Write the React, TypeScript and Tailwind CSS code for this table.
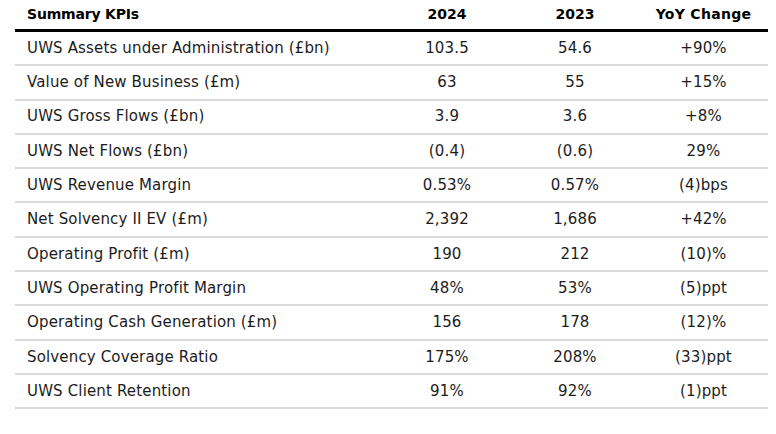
const rows: [string, string, string, string][] = [
  ['UWS Assets under Administration (£bn)', '103.5', '54.6', '+90%'],
  ['Value of New Business (£m)', '63', '55', '+15%'],
  ['UWS Gross Flows (£bn)', '3.9', '3.6', '+8%'],
  ['UWS Net Flows (£bn)', '(0.4)', '(0.6)', '29%'],
  ['UWS Revenue Margin', '0.53%', '0.57%', '(4)bps'],
  ['Net Solvency II EV (£m)', '2,392', '1,686', '+42%'],
  ['Operating Profit (£m)', '190', '212', '(10)%'],
  ['UWS Operating Profit Margin', '48%', '53%', '(5)ppt'],
  ['Operating Cash Generation (£m)', '156', '178', '(12)%'],
  ['Solvency Coverage Ratio', '175%', '208%', '(33)ppt'],
  ['UWS Client Retention', '91%', '92%', '(1)ppt'],
];

export default function App() {
  return (
    <div className="w-[776px] h-[434px] bg-white font-['DejaVu_Sans',sans-serif] text-[#1c1c1c]">
      <div className="ml-[15px] w-[753px]">
        <div className="grid grid-cols-[368px_128px_128px_129px] h-[32px] items-center border-b-[3px] border-black text-[14px] font-bold text-black">
          <div className="pl-3 tracking-[-0.2px]">Summary KPIs</div>
          <div className="text-center">2024</div>
          <div className="text-center">2023</div>
          <div className="text-center tracking-[0.3px]">YoY Change</div>
        </div>
        {rows.map((r) => (
          <div
            key={r[0]}
            className="grid grid-cols-[368px_128px_128px_129px] h-[34.3px] items-center border-b-2 border-[#d9d9d9] text-[15px] tracking-[0.15px]"
          >
            <div className="pl-3">{r[0]}</div>
            <div className="text-center">{r[1]}</div>
            <div className="text-center">{r[2]}</div>
            <div className="text-center">{r[3]}</div>
          </div>
        ))}
      </div>
    </div>
  );
}
